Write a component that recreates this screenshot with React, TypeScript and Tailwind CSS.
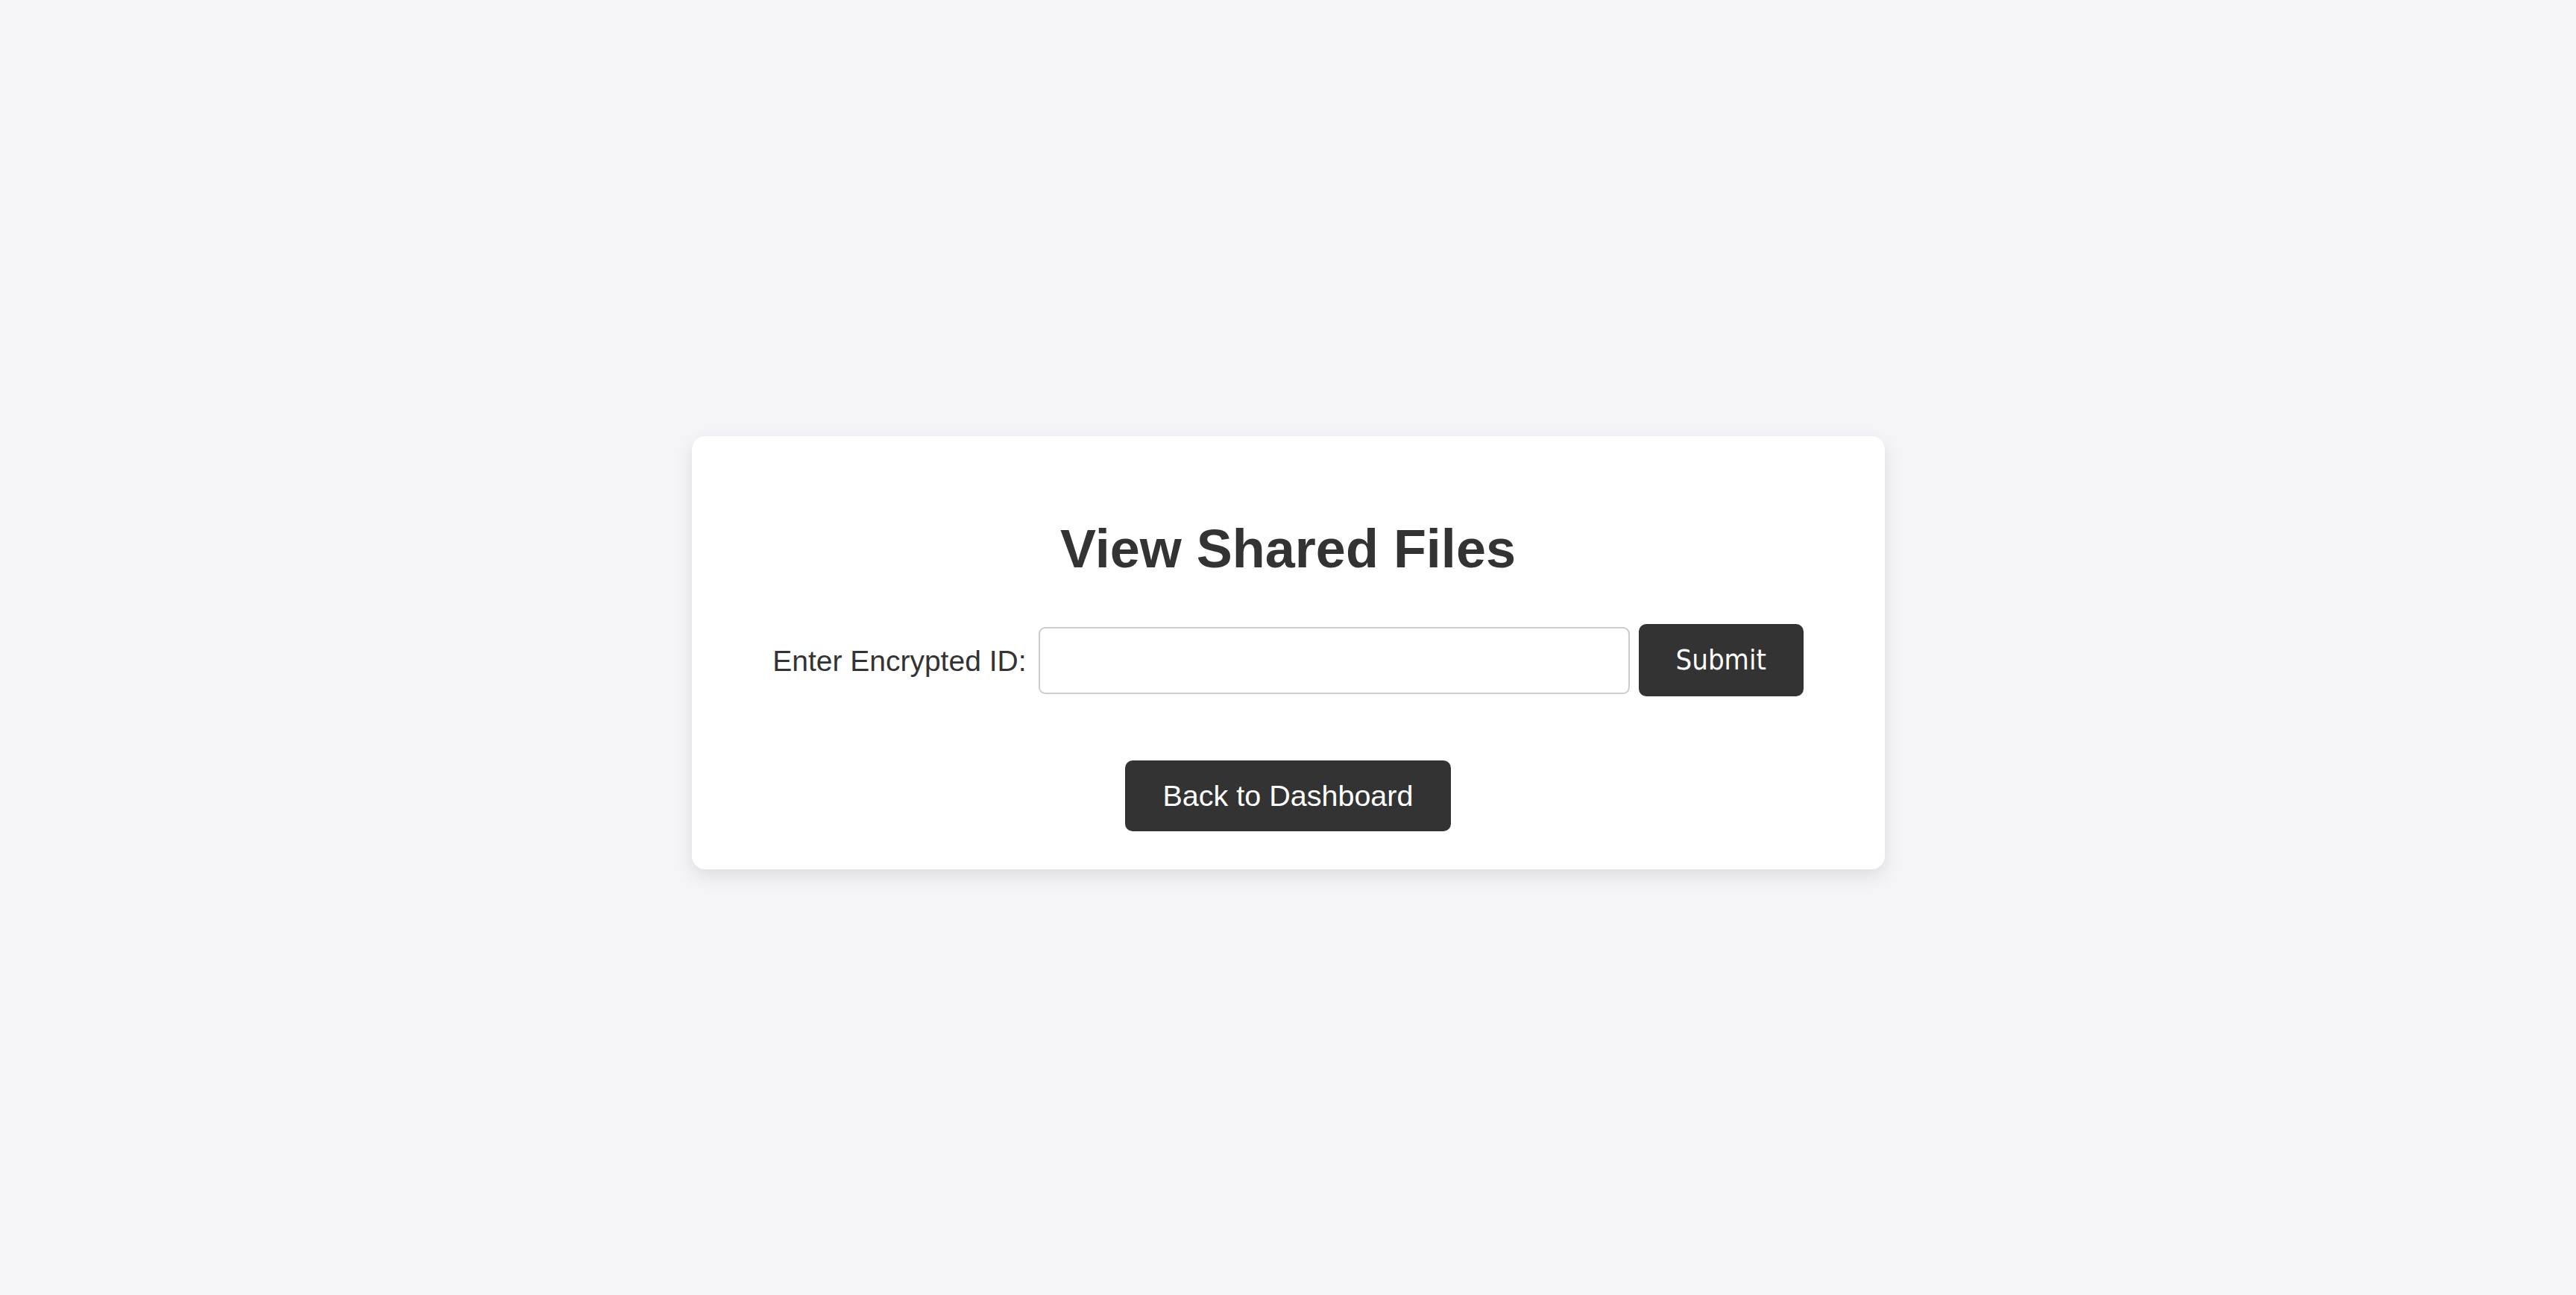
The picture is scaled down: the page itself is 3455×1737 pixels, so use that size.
export default function App() {
    return (
        <div className="min-h-screen flex items-center justify-center bg-[#f4f4f9] pt-[14px] font-['Liberation_Sans',Arial,sans-serif]">
            <div className="w-[1600px] bg-white rounded-[18px] shadow-[0_9px_24px_rgba(0,0,0,0.1)] pt-[115px] pb-[51px] flex flex-col items-center">
                <h1 className="text-[72px] leading-none font-bold text-[#333] mb-[65px]">
                    View Shared Files
                </h1>

                {/* Encrypted ID form */}
                <form
                    className="flex items-center justify-center mb-[86px]"
                    onSubmit={(e) => e.preventDefault()}
                >
                    <label className="text-[39px] text-[#333] mr-[16px] mt-[4px] whitespace-nowrap">
                        Enter Encrypted ID:
                    </label>
                    <input
                        type="text"
                        className="w-[793px] h-[90px] border-2 border-[#cccccc] rounded-[9px] bg-white px-4 text-[36px] outline-none"
                    />
                    <button
                        type="submit"
                        className="ml-[12px] h-[97px] px-[50px] flex items-center bg-[#333] text-white rounded-[10px] text-[38px] font-['DejaVu_Sans_Condensed','DejaVu_Sans',sans-serif]"
                    >
                        Submit
                    </button>
                </form>

                <button className="h-[95px] px-[51px] flex items-center bg-[#333] text-white rounded-[10px] text-[39.5px]">
                    Back to Dashboard
                </button>
            </div>
        </div>
    );
}
